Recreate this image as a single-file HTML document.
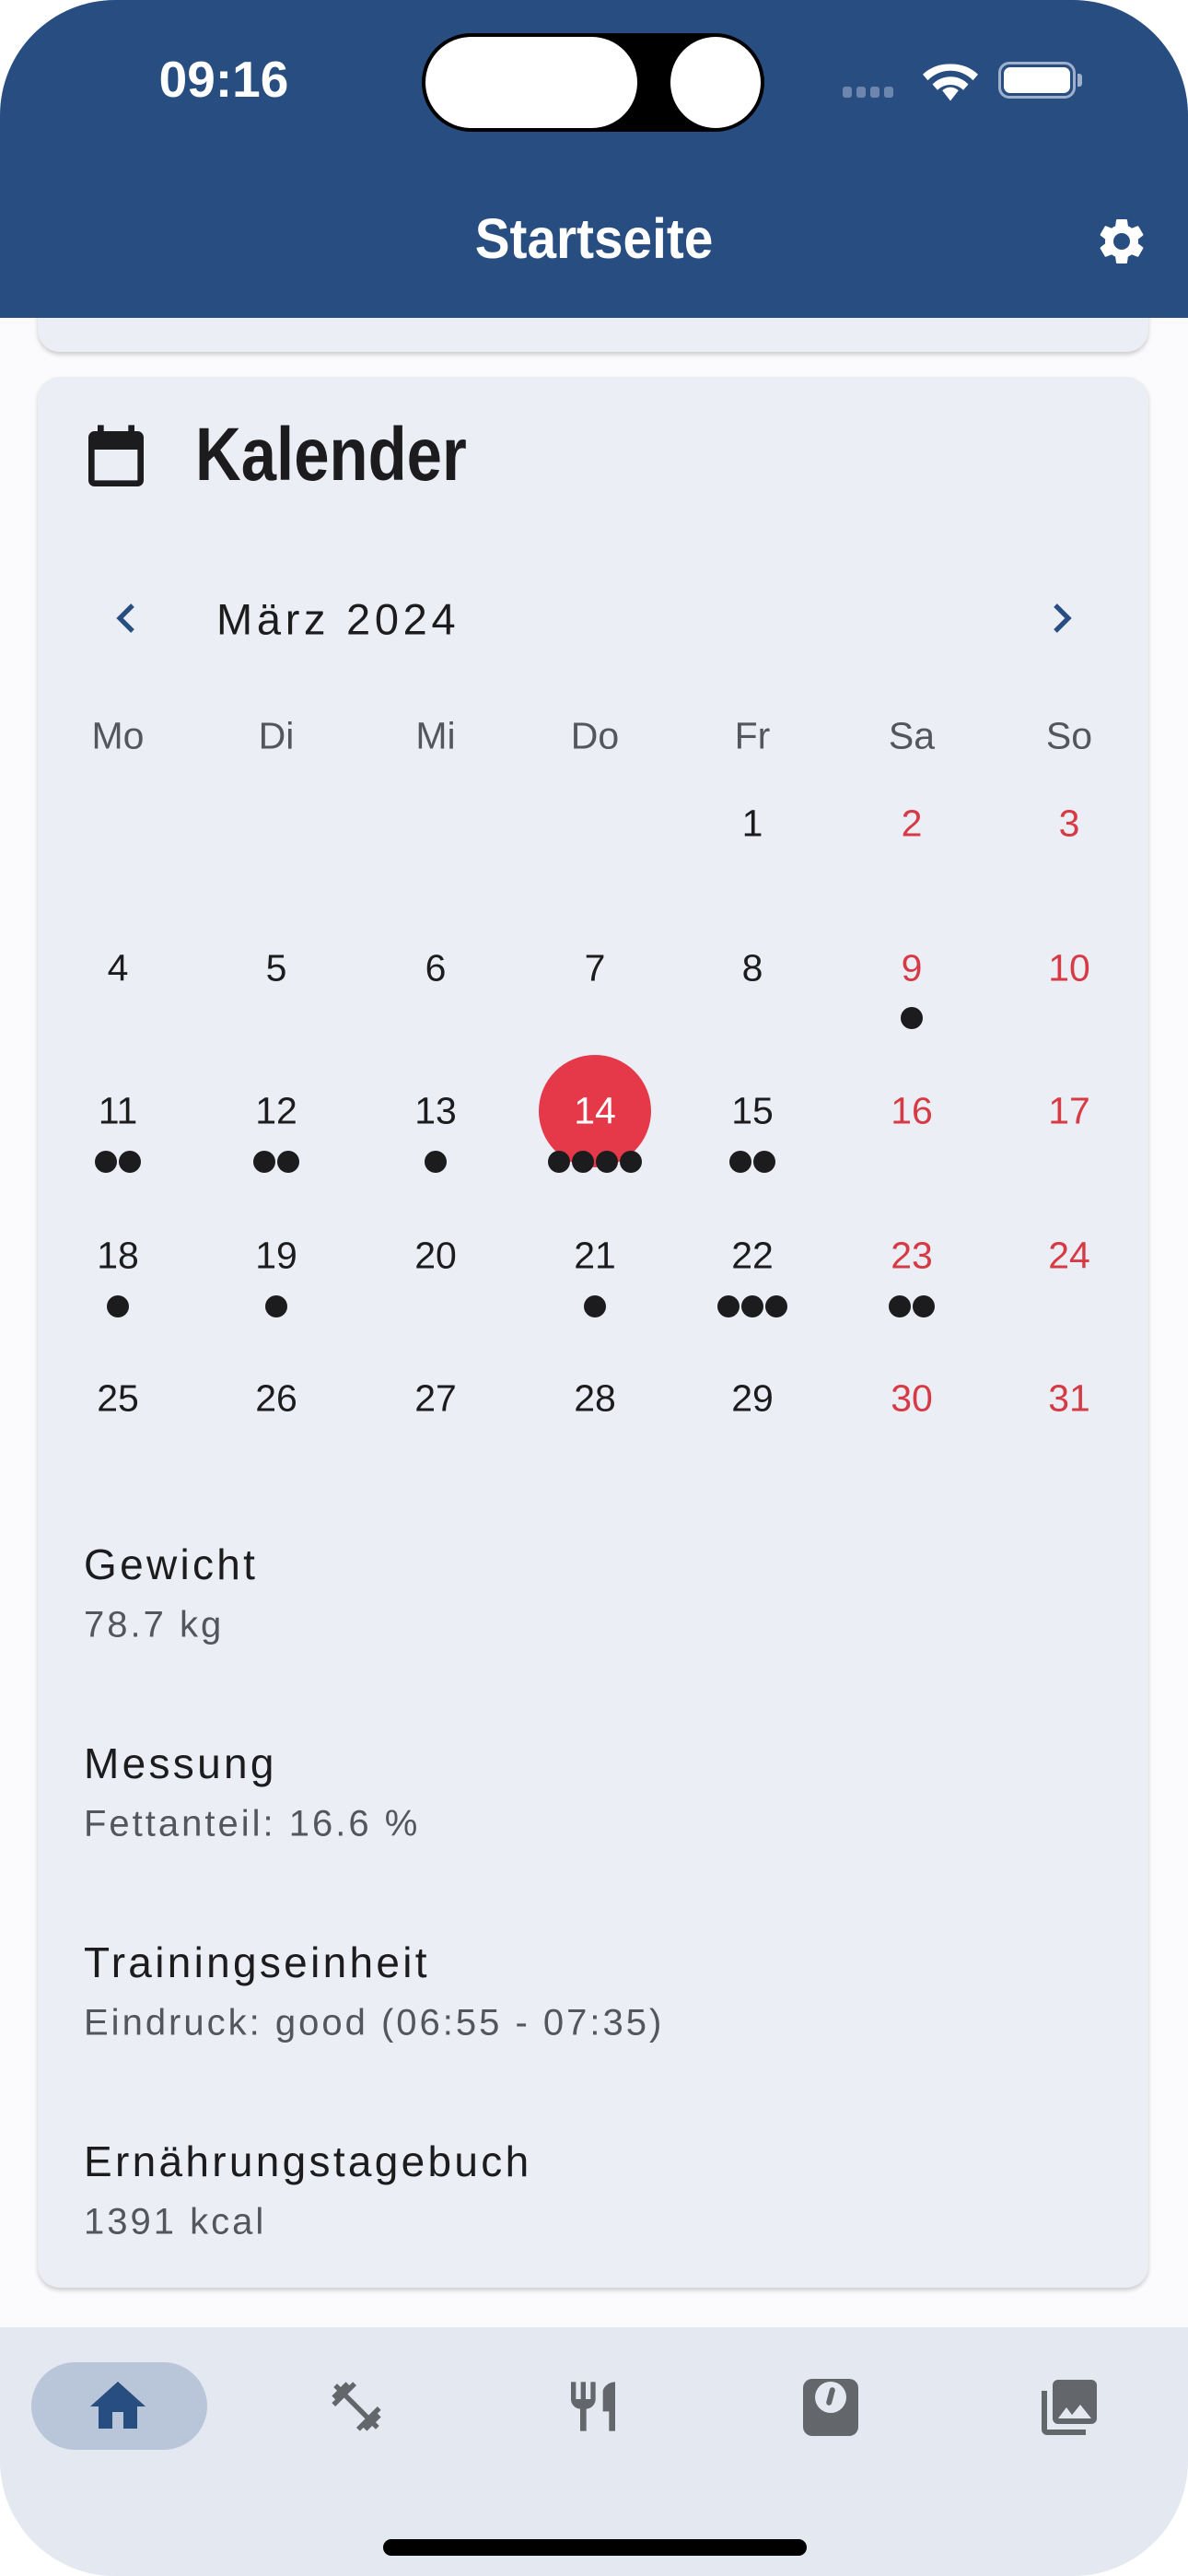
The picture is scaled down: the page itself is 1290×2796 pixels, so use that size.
<!DOCTYPE html>
<html><head><meta charset="utf-8"><style>
*{margin:0;padding:0;box-sizing:border-box}
body{width:1290px;height:2796px;background:#fff;position:relative;overflow:hidden;font-family:"Liberation Sans",sans-serif}
.screen{position:absolute;left:0;top:0;width:1290px;height:2796px;border-radius:125px;background:#fbfafd;overflow:hidden}
.hdr{position:absolute;left:0;top:0;width:1290px;height:345px;background:#284d80}
.abs{position:absolute}
.card{position:absolute;left:41px;width:1206px;background:#eceef6;border-radius:24px;box-shadow:0 3px 5px rgba(0,0,0,.18)}
.num{position:absolute;width:120px;text-align:center;font-size:41px;color:#1c1c1e;transform:translate(-60px,-50%)}
.red{color:#d63b45}
.dots{position:absolute;height:24px;display:flex;transform:translateX(-50%)}
.dots i{display:block;width:24px;height:24px;border-radius:50%;background:#1c1c1e;margin-right:2px}
.dots i:last-child{margin-right:0}
.t1{position:absolute;left:91px;font-size:46px;color:#1c1c1e;letter-spacing:3.3px;transform:translateY(-50%)}
.t2{position:absolute;left:91px;font-size:40px;color:#55565c;letter-spacing:3px;transform:translateY(-50%)}
.nav{position:absolute;left:0;top:2526px;width:1290px;height:270px;background:#e3e8f1}
</style></head><body>
<div class="screen">
<div class="card" style="top:300px;height:82px;border-radius:0 0 24px 24px"></div>
<div class="hdr"></div>
<div class="abs" style="left:243px;top:86px;transform:translate(-50%,-50%);color:#fff;font-size:55px;font-weight:bold">09:16</div>
<div class="abs" style="left:458px;top:36px;width:372px;height:107px;background:#000;border-radius:54px"></div>
<div class="abs" style="left:462px;top:40px;width:230px;height:99px;background:#fff;border-radius:50px"></div>
<div class="abs" style="left:728px;top:40px;width:98px;height:99px;background:#fff;border-radius:50%"></div>
<div class="abs" style="left:915px;top:94px;display:flex;gap:5px"><i style="width:10px;height:12px;background:#6d86ad;border-radius:3px"></i><i style="width:10px;height:12px;background:#6d86ad;border-radius:3px"></i><i style="width:10px;height:12px;background:#6d86ad;border-radius:3px"></i><i style="width:10px;height:12px;background:#6d86ad;border-radius:3px"></i></div>
<svg class="abs" style="left:1002px;top:64px" width="60" height="46" viewBox="0 0 24 18"><path d="M12 18L8.5 13.5a5 5 0 0 1 7 0z M12 2A17 17 0 0 0 0 6.5l2.2 2.6a13.5 13.5 0 0 1 19.6 0L24 6.5A17 17 0 0 0 12 2z M12 7.5a11 11 0 0 0-7.8 3.3l2.2 2.5a8 8 0 0 1 11.2 0l2.2-2.5A11 11 0 0 0 12 7.5z" fill="#fff"/></svg>
<div class="abs" style="left:1084px;top:67px;width:84px;height:40px;border:3px solid #9fb0cc;border-radius:12px"></div>
<div class="abs" style="left:1090px;top:73px;width:72px;height:28px;background:#fff;border-radius:7px"></div>
<div class="abs" style="left:1170px;top:80px;width:5px;height:14px;background:#9fb0cc;border-radius:0 3px 3px 0"></div>
<div class="abs" style="left:645px;top:259px;transform:translate(-50%,-50%) scaleX(0.93);color:#fff;font-size:61px;font-weight:bold">Startseite</div>
<svg class="abs" style="left:1188px;top:232px" width="60" height="60" viewBox="0 0 24 24"><path fill="#fff" d="M19.14 12.94c.04-.3.06-.61.06-.94 0-.32-.02-.64-.07-.94l2.03-1.58a.49.49 0 0 0 .12-.61l-1.92-3.32a.49.49 0 0 0-.59-.22l-2.39.96c-.5-.38-1.03-.7-1.62-.94l-.36-2.54a.48.48 0 0 0-.48-.41h-3.84c-.24 0-.43.17-.47.41l-.36 2.54c-.59.24-1.13.57-1.62.94l-2.39-.96a.49.49 0 0 0-.59.22L2.74 8.87a.47.47 0 0 0 .12.61l2.03 1.58c-.05.3-.09.63-.09.94s.02.64.07.94l-2.03 1.58a.49.49 0 0 0-.12.61l1.92 3.32c.12.22.37.29.59.22l2.39-.96c.5.38 1.03.7 1.62.94l.36 2.54c.05.24.24.41.48.41h3.84c.24 0 .44-.17.47-.41l.36-2.54c.59-.24 1.13-.56 1.62-.94l2.39.96c.22.08.47 0 .59-.22l1.92-3.32a.47.47 0 0 0-.12-.61l-2.01-1.58zM12 15.6A3.6 3.6 0 1 1 12 8.4a3.6 3.6 0 0 1 0 7.2z"/></svg>

<div class="card" style="top:409px;height:2074px"></div>
<svg class="abs" style="left:92px;top:458px" width="68" height="70" viewBox="3 1 18 21"><path fill="#1c1c1e" d="M19 4h-1V2h-2v2H8V2H6v2H5c-1.1 0-2 .9-2 2v14c0 1.1.9 2 2 2h14c1.1 0 2-.9 2-2V6c0-1.1-.9-2-2-2zm0 16H5V10h14v10z"/></svg>
<div class="abs" style="left:212px;top:494px;transform-origin:0 50%;transform:translateY(-50%) scaleX(0.84);font-size:82px;font-weight:bold;color:#1c1c1e">Kalender</div>
<svg class="abs" style="left:122px;top:651px" width="30" height="40" viewBox="0 0 15 20"><path d="M11 3L4 10l7 7" stroke="#284d80" stroke-width="2.6" fill="none"/></svg>
<div class="abs" style="left:235px;top:672px;transform:translateY(-50%);font-size:47px;color:#1c1c1e;letter-spacing:4.7px">März 2024</div>
<svg class="abs" style="left:1138px;top:651px" width="30" height="40" viewBox="0 0 15 20"><path d="M4 3l7 7-7 7" stroke="#284d80" stroke-width="2.6" fill="none"/></svg>

<div class="abs" style="left:585px;top:1145px;width:122px;height:122px;border-radius:50%;background:#e5394a"></div>

<div class="num" style="left:128px;top:799px;color:#55565c">Mo</div>
<div class="num" style="left:300px;top:799px;color:#55565c">Di</div>
<div class="num" style="left:473px;top:799px;color:#55565c">Mi</div>
<div class="num" style="left:646px;top:799px;color:#55565c">Do</div>
<div class="num" style="left:817px;top:799px;color:#55565c">Fr</div>
<div class="num" style="left:990px;top:799px;color:#55565c">Sa</div>
<div class="num" style="left:1161px;top:799px;color:#55565c">So</div>

<div class="num" style="left:817px;top:894px">1</div>
<div class="num red" style="left:990px;top:894px">2</div>
<div class="num red" style="left:1161px;top:894px">3</div>

<div class="num" style="left:128px;top:1051px">4</div>
<div class="num" style="left:300px;top:1051px">5</div>
<div class="num" style="left:473px;top:1051px">6</div>
<div class="num" style="left:646px;top:1051px">7</div>
<div class="num" style="left:817px;top:1051px">8</div>
<div class="num red" style="left:990px;top:1051px">9</div>
<div class="num red" style="left:1161px;top:1051px">10</div>
<div class="dots" style="left:990px;top:1093px"><i></i></div>

<div class="num" style="left:128px;top:1206px">11</div>
<div class="num" style="left:300px;top:1206px">12</div>
<div class="num" style="left:473px;top:1206px">13</div>
<div class="num" style="left:646px;top:1206px;color:#fff">14</div>
<div class="num" style="left:817px;top:1206px">15</div>
<div class="num red" style="left:990px;top:1206px">16</div>
<div class="num red" style="left:1161px;top:1206px">17</div>
<div class="dots" style="left:128px;top:1249px"><i></i><i></i></div>
<div class="dots" style="left:300px;top:1249px"><i></i><i></i></div>
<div class="dots" style="left:473px;top:1249px"><i></i></div>
<div class="dots" style="left:646px;top:1249px"><i></i><i></i><i></i><i></i></div>
<div class="dots" style="left:817px;top:1249px"><i></i><i></i></div>

<div class="num" style="left:128px;top:1363px">18</div>
<div class="num" style="left:300px;top:1363px">19</div>
<div class="num" style="left:473px;top:1363px">20</div>
<div class="num" style="left:646px;top:1363px">21</div>
<div class="num" style="left:817px;top:1363px">22</div>
<div class="num red" style="left:990px;top:1363px">23</div>
<div class="num red" style="left:1161px;top:1363px">24</div>
<div class="dots" style="left:128px;top:1406px"><i></i></div>
<div class="dots" style="left:300px;top:1406px"><i></i></div>
<div class="dots" style="left:646px;top:1406px"><i></i></div>
<div class="dots" style="left:817px;top:1406px"><i></i><i></i><i></i></div>
<div class="dots" style="left:990px;top:1406px"><i></i><i></i></div>

<div class="num" style="left:128px;top:1518px">25</div>
<div class="num" style="left:300px;top:1518px">26</div>
<div class="num" style="left:473px;top:1518px">27</div>
<div class="num" style="left:646px;top:1518px">28</div>
<div class="num" style="left:817px;top:1518px">29</div>
<div class="num red" style="left:990px;top:1518px">30</div>
<div class="num red" style="left:1161px;top:1518px">31</div>

<div class="t1" style="top:1698px">Gewicht</div>
<div class="t2" style="top:1764px">78.7 kg</div>
<div class="t1" style="top:1914px">Messung</div>
<div class="t2" style="top:1980px">Fettanteil: 16.6 %</div>
<div class="t1" style="top:2130px">Trainingseinheit</div>
<div class="t2" style="top:2196px">Eindruck: good (06:55 - 07:35)</div>
<div class="t1" style="top:2346px">Ernährungstagebuch</div>
<div class="t2" style="top:2412px">1391 kcal</div>

<div class="nav"></div>
<div class="abs" style="left:34px;top:2564px;width:191px;height:95px;border-radius:48px;background:#b9c6da"></div>
<svg class="abs" style="left:98px;top:2584px" width="60" height="56" viewBox="2 3 20 18"><path fill="#284d80" d="M10 20v-6h4v6h5v-8h3L12 3 2 12h3v8z"/></svg>
<svg class="abs" style="left:355px;top:2580px" width="64" height="64" viewBox="0 0 24 24"><path fill="#63666b" d="M20.57 14.86L22 13.43 20.57 12 17 15.57 8.43 7 12 3.43 10.57 2 9.14 3.43 7.71 2 5.57 4.14 4.14 2.71 2.71 4.14l1.43 1.43L2 7.71l1.43 1.43L2 10.57 3.43 12 7 8.43 15.57 17 12 20.57 13.43 22l1.43-1.43L16.29 22l2.14-2.14 1.43 1.43 1.43-1.43-1.43-1.43L22 16.29z"/></svg>
<svg class="abs" style="left:612px;top:2580px" width="64" height="64" viewBox="0 0 24 24"><path fill="#63666b" d="M11 9H9V2H7v7H5V2H3v7c0 2.12 1.66 3.84 3.75 3.97V22h2.5v-9.03C11.34 12.84 13 11.12 13 9V2h-2v7zm5-3v8h2.5v8H21V2c-2.76 0-5 2.240-5 4z"/></svg>
<div class="abs" style="left:872px;top:2582px;width:60px;height:62px;border-radius:10px;background:#63666b"></div>
<div class="abs" style="left:885px;top:2585px;width:34px;height:34px;border-radius:50%;background:#e3e8f1"></div>
<div class="abs" style="left:899px;top:2591px;width:6px;height:20px;background:#63666b;border-radius:3px;transform:rotate(15deg)"></div>
<svg class="abs" style="left:1128px;top:2580px" width="66" height="66" viewBox="1 1 22 22"><path fill="#63666b" d="M22 16V4c0-1.1-.9-2-2-2H8c-1.1 0-2 .9-2 2v12c0 1.1.9 2 2 2h12c1.1 0 2-.9 2-2zm-11-4l2.03 2.71L16 11l4 5H8l3-4zM2 6v14c0 1.1.9 2 2 2h14v-2H4V6H2z"/></svg>
<div class="abs" style="left:416px;top:2756px;width:460px;height:18px;border-radius:9px;background:#000"></div>
</div>
</body></html>
